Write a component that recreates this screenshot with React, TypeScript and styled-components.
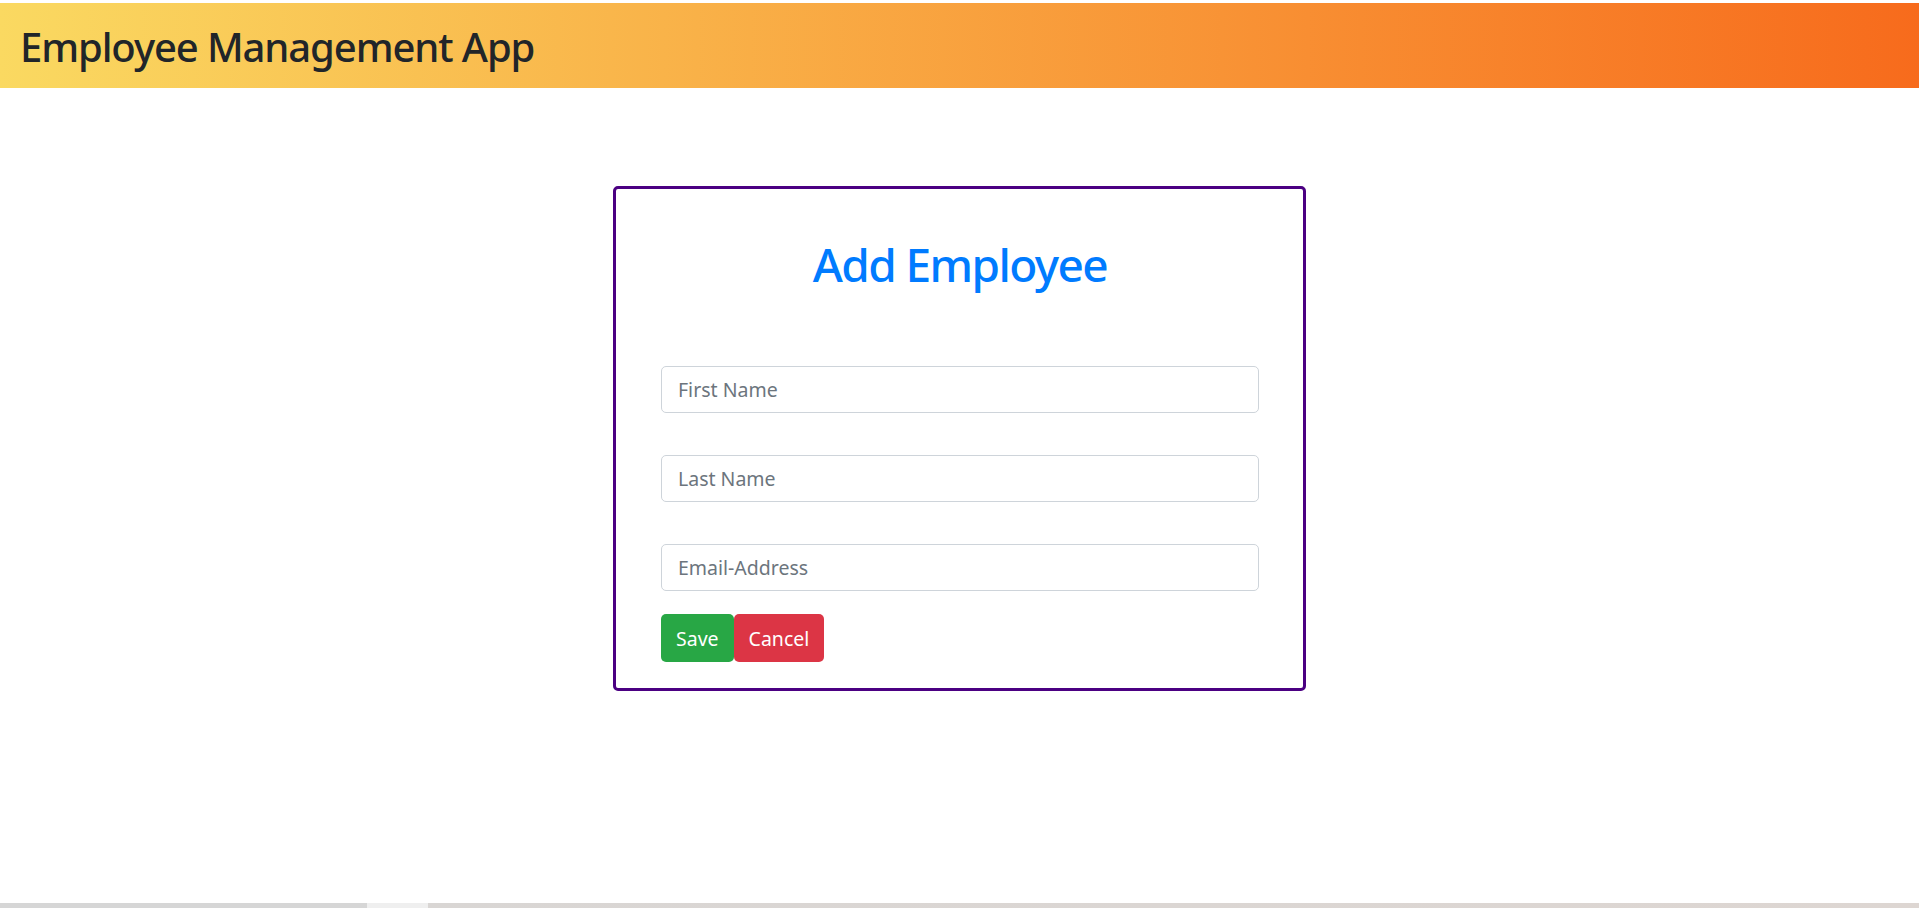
import React from "react";
import styled, { createGlobalStyle } from "styled-components";

const GlobalStyle = createGlobalStyle`
  html, body {
    margin: 0;
    padding: 0;
    background: #ffffff;
  }
  body {
    font-family: "Noto Sans", "Open Sans", Arial, sans-serif;
    color: #212529;
  }
  * { box-sizing: border-box; }
`;

const Page = styled.div`
  min-height: 100vh;
  display: flex;
  flex-direction: column;
  padding-top: 3px;
`;

const Header = styled.header`
  height: 85px;
  display: flex;
  align-items: center;
  padding: 2px 0 0 20px;
  background: linear-gradient(to right, #fad961, #f76b1c);
`;

const Brand = styled.h2`
  margin: 0;
  font-size: 40px;
  line-height: 48px;
  font-weight: 500;
  color: #212529;
  letter-spacing: -1.1px;
`;

const Main = styled.main`
  flex: 1;
  display: flex;
  justify-content: center;
  align-items: flex-start;
  padding-top: 98px;
`;

const Card = styled.div`
  width: 693px;
  border: 3px solid #4b0082;
  border-radius: 5px;
  padding: 48px 44px 26px 45px;
  background: #fff;
`;

const Title = styled.h1`
  margin: 0 0 74px;
  text-align: center;
  color: #007bff;
  font-size: 46px;
  line-height: 55px;
  font-weight: 500;
  letter-spacing: -1.6px;
`;

const Form = styled.form`
  display: flex;
  flex-direction: column;
`;

const Field = styled.div<{ $gap: number }>`
  margin-bottom: ${(p) => p.$gap}px;
`;

const Input = styled.input`
  display: block;
  width: 100%;
  height: 47px;
  padding: 0 16px;
  font-family: inherit;
  font-size: 19.5px;
  color: #495057;
  background: #fff;
  border: 1px solid #ced4da;
  border-radius: 5px;
  outline: none;
  &::placeholder {
    color: #6c757d;
    opacity: 1;
  }
`;

const Actions = styled.div`
  display: flex;
`;

const Button = styled.button<{ $variant: "success" | "danger" }>`
  height: 48px;
  padding: 0 15px;
  border: none;
  border-radius: 5px;
  font-family: inherit;
  font-size: 19.5px;
  color: #fff;
  cursor: pointer;
  background: ${(p) => (p.$variant === "success" ? "#28a745" : "#dc3545")};
`;

const BottomBar = styled.div`
  height: 5px;
  background: linear-gradient(
    to right,
    #d6d6d6 0,
    #d6d6d6 367px,
    #efefef 367px,
    #efefef 428px,
    #d9d6d4 428px,
    #ddd6d2 100%
  );
`;

export default function App() {
  return (
    <>
      <GlobalStyle />
      <Page>
        <Header>
          <Brand>Employee Management App</Brand>
        </Header>
        <Main>
          <Card>
            <Title>Add Employee</Title>
            <Form onSubmit={(e) => e.preventDefault()}>
              <Field $gap={42}>
                <Input placeholder="First Name" name="firstName" />
              </Field>
              <Field $gap={42}>
                <Input placeholder="Last Name" name="lastName" />
              </Field>
              <Field $gap={23}>
                <Input placeholder="Email-Address" name="emailId" />
              </Field>
              <Actions>
                <Button type="button" $variant="success">Save</Button>
                <Button type="button" $variant="danger">Cancel</Button>
              </Actions>
            </Form>
          </Card>
        </Main>
        <BottomBar />
      </Page>
    </>
  );
}
